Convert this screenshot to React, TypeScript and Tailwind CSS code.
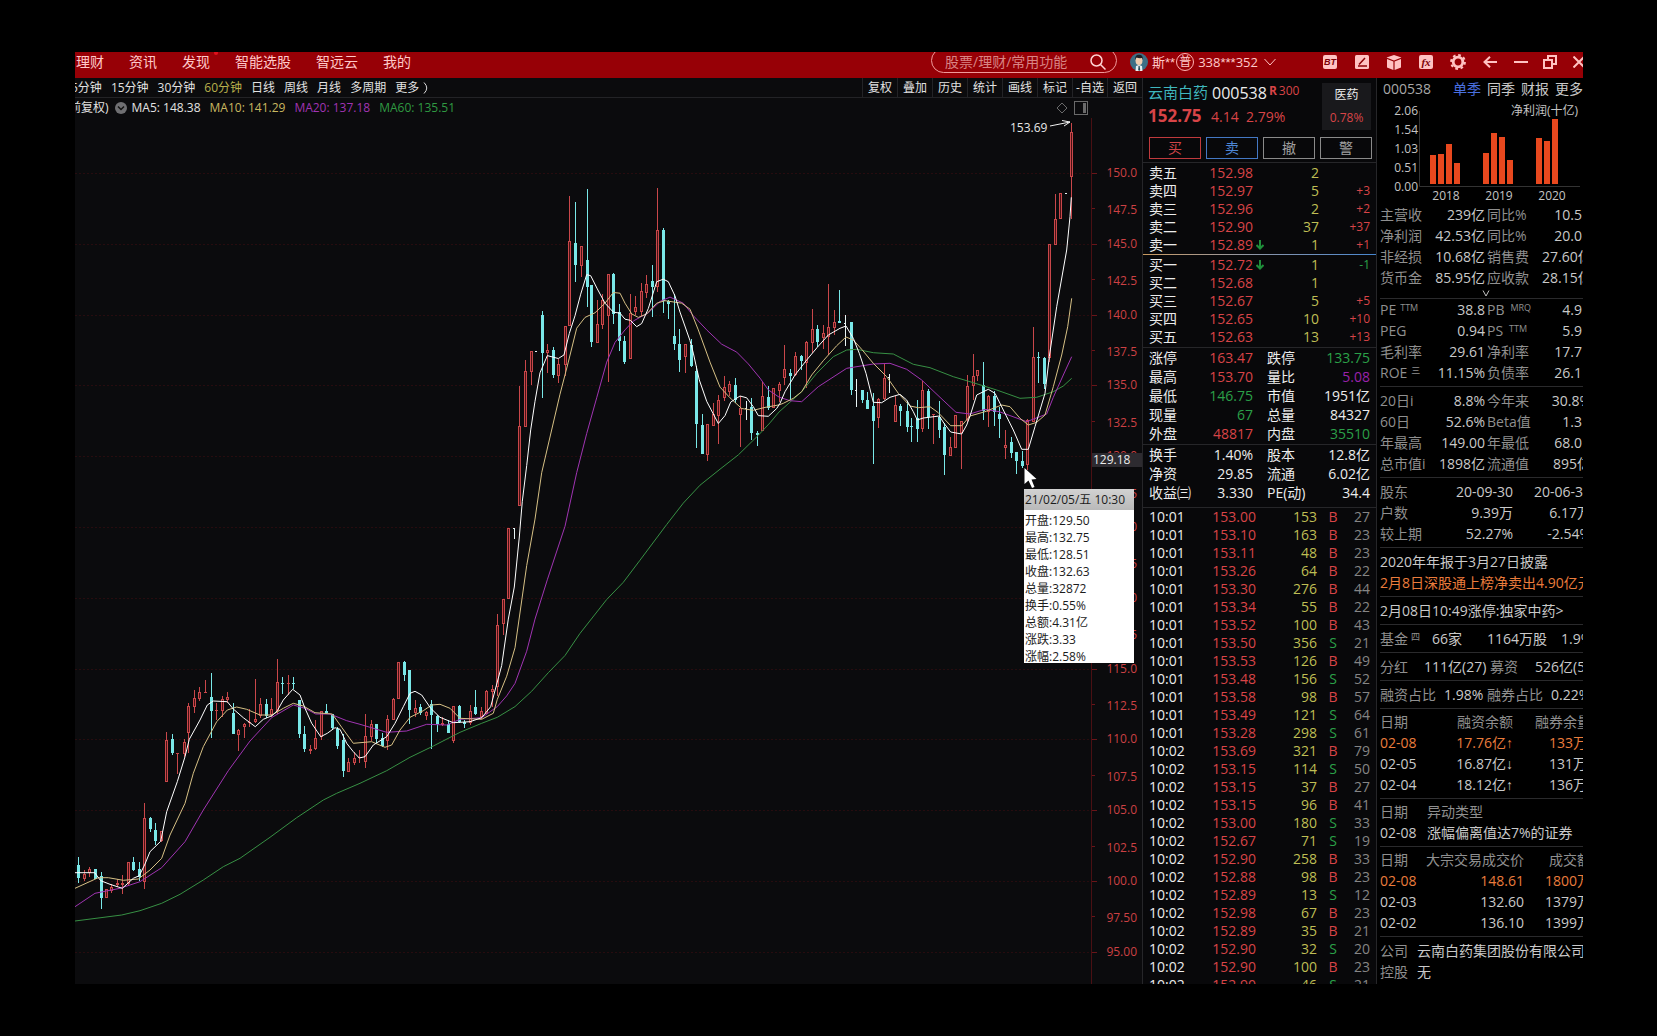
import React from "react";

type Kind = "r" | "c" | "w";
type Bar = [number, number, number, number, number, Kind];
interface Segment<T> {
  x: number;
  y: number;
  ky: number;
  rows: T[];
}

const K = 1 / 3;

// Each bar: x, high, body top, body bottom, low, kind. Units are thirds of a chart unit.
const BARS: Segment<Bar>[] = [
  {
    x: 70, y: 640, ky: K,
    rows: [
      [25, 652, 675, 714, 730, "c"], [43, 690, 702, 717, 722, "r"], [58, 682, 688, 700, 710, "r"], [76, 686, 688, 717, 718, "c"],
      [92, 697, 709, 773, 806, "c"], [109, 747, 748, 775, 775, "r"], [124, 733, 740, 752, 758, "r"], [141, 718, 730, 736, 740, "r"],
      [157, 706, 730, 735, 762, "r"], [175, 667, 667, 732, 735, "r"], [190, 652, 666, 690, 692, "c"], [208, 667, 688, 711, 724, "c"],
      [223, 489, 535, 725, 748, "r"], [241, 532, 534, 566, 575, "c"], [256, 550, 570, 602, 614, "c"], [274, 574, 574, 604, 606, "r"],
      [289, 277, 300, 425, 425, "r"], [307, 283, 298, 338, 344, "c"], [322, 340, 340, 342, 402, "r"], [341, 298, 307, 342, 350, "r"],
      [355, 190, 199, 280, 340, "r"], [373, 150, 175, 202, 220, "r"], [388, 141, 156, 178, 184, "r"], [406, 120, 156, 158, 160, "r"],
      [424, 99, 171, 212, 293, "c"], [439, 190, 210, 214, 240, "r"], [457, 167, 177, 213, 230, "r"], [472, 156, 172, 180, 190, "r"],
      [490, 188, 218, 281, 282, "c"], [505, 266, 269, 285, 332, "r"], [523, 250, 252, 262, 295, "r"], [538, 208, 245, 250, 260, "r"],
      [556, 117, 238, 246, 250, "r"], [571, 175, 192, 228, 235, "r"], [589, 178, 193, 228, 235, "c"], [604, 175, 207, 226, 230, "r"],
      [622, 57, 126, 213, 222, "r"], [637, 111, 129, 132, 162, "c"], [655, 106, 128, 132, 165, "r"], [670, 111, 128, 132, 147, "c"],
      [688, 180, 180, 283, 293, "c"], [703, 258, 283, 328, 335, "c"], [721, 315, 328, 332, 342, "r"], [736, 240, 295, 328, 330, "r"],
      [754, 212, 212, 290, 300, "r"], [769, 192, 212, 219, 222, "c"], [787, 222, 222, 264, 268, "c"], [802, 262, 268, 318, 328, "c"],
      [820, 283, 300, 392, 410, "c"], [835, 355, 367, 395, 395, "r"], [853, 337, 353, 368, 375, "r"], [868, 330, 350, 353, 368, "r"],
      [886, 223, 288, 367, 383, "r"], [904, 240, 252, 290, 303, "r"], [919, 252, 252, 297, 310, "c"], [937, 280, 295, 317, 322, "c"],
      [952, 225, 238, 302, 330, "r"], [970, 174, 176, 240, 240, "r"], [985, 67, 67, 178, 178, "r"], [1003, 64, 67, 104, 122, "c"],
      [1018, 90, 90, 210, 252, "c"], [1036, 180, 203, 218, 230, "r"], [1051, 193, 202, 220, 225, "c"], [1069, 214, 216, 228, 240, "r"],
      [1084, 180, 192, 226, 326, "c"], [1102, 225, 228, 252, 275, "c"], [1117, 230, 250, 254, 258, "r"], [1135, 240, 252, 280, 280, "c"],
      [1150, 197, 199, 303, 310, "r"], [1168, 195, 199, 246, 250, "c"], [1183, 240, 247, 252, 265, "c"], [1201, 195, 212, 250, 255, "r"],
      [1216, 150, 200, 222, 224, "c"], [1234, 200, 212, 232, 237, "r"], [1249, 150, 154, 222, 222, "r"], [1267, 135, 148, 155, 200, "r"],
    ],
  },
  {
    x: 460, y: 180, ky: 0.357,
    rows: [
      [112, 1215, 1246, 1420, 1445, "r"], [130, 1173, 1173, 1245, 1275, "r"], [145, 975, 975, 1175, 1175, "r"], [163, 974, 976, 978, 1005, "w"],
      [178, 578, 690, 912, 912, "r"], [196, 505, 535, 693, 693, "r"], [214, 480, 480, 537, 575, "r"], [229, 480, 480, 482, 482, "w"],
      [247, 367, 378, 484, 610, "c"], [262, 460, 475, 484, 540, "r"], [280, 468, 476, 546, 556, "c"], [295, 500, 516, 550, 570, "r"],
      [314, 409, 409, 518, 548, "r"], [328, 45, 171, 408, 410, "r"], [346, 62, 176, 238, 286, "c"], [362, 185, 185, 240, 272, "r"],
      [380, 25, 224, 299, 357, "c"], [394, 294, 295, 455, 468, "c"], [412, 335, 402, 456, 456, "r"], [427, 320, 335, 405, 418, "r"],
      [445, 264, 264, 380, 565, "r"], [460, 260, 263, 375, 402, "c"], [478, 348, 370, 450, 478, "c"], [493, 437, 450, 510, 515, "c"],
      [511, 320, 372, 500, 500, "r"], [526, 325, 357, 370, 378, "r"], [544, 288, 310, 370, 382, "r"], [559, 265, 290, 317, 330, "r"],
      [577, 238, 283, 300, 385, "c"], [592, 22, 141, 300, 315, "r"], [610, 134, 139, 338, 372, "c"], [625, 335, 340, 348, 390, "c"],
      [643, 320, 437, 459, 475, "c"], [658, 418, 459, 504, 538, "c"], [676, 460, 460, 497, 540, "r"], [694, 445, 462, 520, 525, "c"],
      [709, 520, 535, 683, 752, "c"], [727, 655, 686, 767, 767, "c"], [742, 683, 683, 770, 787, "r"], [760, 625, 655, 688, 690, "r"],
      [775, 602, 615, 660, 740, "r"], [793, 550, 580, 610, 620, "r"], [808, 562, 572, 595, 605, "r"], [826, 555, 574, 615, 625, "c"],
      [841, 605, 640, 658, 748, "r"], [859, 620, 640, 642, 672, "w"], [874, 610, 635, 708, 728, "c"], [892, 703, 710, 713, 745, "c"],
      [907, 567, 605, 703, 703, "r"], [925, 577, 608, 640, 645, "c"], [940, 582, 582, 640, 640, "r"], [957, 565, 572, 590, 622, "r"],
    ],
  },
  {
    x: 740, y: 260, ky: K,
    rows: [
      [133, 255, 327, 355, 375, "r"], [151, 327, 340, 347, 420, "c"], [166, 277, 288, 345, 348, "r"], [184, 285, 288, 302, 330, "c"],
      [199, 244, 247, 310, 385, "r"], [217, 147, 207, 248, 280, "r"], [232, 195, 207, 247, 262, "c"], [250, 195, 218, 235, 268, "r"],
      [265, 72, 202, 230, 285, "r"], [283, 150, 186, 203, 225, "r"], [298, 90, 183, 188, 188, "c"], [316, 165, 190, 192, 258, "w"],
      [334, 185, 186, 390, 405, "c"], [349, 357, 390, 391, 440, "w"], [367, 390, 391, 420, 430, "c"], [382, 395, 420, 446, 446, "c"],
      [400, 400, 438, 483, 612, "c"], [415, 415, 416, 475, 503, "r"], [433, 312, 355, 418, 420, "r"], [448, 342, 352, 355, 400, "w"],
      [466, 407, 435, 485, 485, "r"], [481, 432, 437, 453, 498, "c"], [500, 425, 453, 500, 515, "c"], [514, 475, 498, 502, 545, "c"],
      [532, 420, 475, 507, 545, "c"], [547, 362, 391, 507, 517, "r"], [565, 387, 392, 470, 507, "c"], [580, 462, 463, 465, 552, "r"],
      [598, 422, 470, 510, 535, "c"], [613, 488, 502, 584, 645, "c"], [631, 530, 562, 587, 587, "r"], [646, 465, 466, 563, 563, "r"],
      [664, 482, 483, 520, 628, "r"], [680, 345, 378, 480, 485, "r"], [698, 283, 348, 377, 420, "r"], [712, 330, 330, 348, 362, "r"],
      [730, 305, 374, 453, 480, "c"], [745, 405, 408, 455, 502, "r"], [763, 392, 407, 457, 497, "c"], [778, 440, 462, 478, 535, "c"],
    ],
  },
  {
    x: 970, y: 110, ky: K,
    rows: [
      [106, 960, 1005, 1013, 1047, "r"], [124, 980, 995, 1028, 1045, "c"], [139, 1025, 1026, 1053, 1092, "c"], [157, 1022, 1052, 1068, 1075, "c"],
      [172, 926, 930, 1065, 1080, "r"], [190, 652, 741, 935, 935, "r"], [205, 725, 741, 744, 818, "c"], [223, 741, 743, 822, 838, "c"],
      [238, 403, 403, 745, 755, "r"], [256, 252, 327, 404, 404, "r"], [271, 249, 249, 326, 326, "r"], [289, 249, 249, 252, 252, "w"],
      [304, 38, 67, 200, 327, "r"],
    ],
  },
];

const ORIGINS = [
  { x: 70, y: 640, ky: K },
  { x: 460, y: 180, ky: 0.357 },
  { x: 740, y: 260, ky: K },
  { x: 970, y: 110, ky: K },
];

const AVERAGES: { color: string; parts: string[] }[] = [
  {
    color: "#379044",
    parts: [
      "15,843 155,825 210,812 275,790 330,763 400,720 460,680 510,655 600,592 680,533 760,480 800,460 870,430 950,392 1020,352 1090,318 1170,277 1235,250",
      "112,1505 165,1475 215,1432 265,1380 315,1332 360,1270 440,1175 490,1127 540,1065 620,965 670,905 720,855 780,810 835,770 895,715 930,680 957,650",
      "185,395 230,340 280,290 320,270 350,268 400,278 460,282 520,313 570,323 640,350",
      "0,815 80,840 150,865 200,862 250,845 280,828 305,805",
    ],
  },
  {
    color: "#a034b2",
    parts: [
      "15,800 75,760 150,745 210,725 275,683 345,605 400,510 475,392 540,303 606,232 670,195 705,205 737,222 780,222 830,242 870,253 950,277 1010,273 1070,253 1130,255 1170,238 1235,233",
      "112,1475 140,1445 165,1410 200,1320 225,1230 262,1120 315,970 350,820 380,710 410,610 440,510 465,455 495,420 520,395 565,372 600,340 630,328 670,345 700,380 740,420 785,460 830,482 865,515 900,555 925,588 957,608",
      "150,422 185,425 235,380 320,325 400,312 450,310 500,328 545,360 600,412 648,457",
      "0,912 45,898 88,905 170,935 230,912 250,862 280,795 305,740",
    ],
  },
  {
    color: "#d6c085",
    parts: [
      "15,745 85,713 115,713 160,721 205,717 240,690 275,655 300,585 345,490 370,400 400,320 440,245 472,210 500,201 530,208 570,225 606,225 640,205 670,190 700,198 735,218 787,222 815,262 850,310 905,305 945,322 965,315 990,270 1020,232 1060,212 1085,195 1110,193 1140,205 1170,235 1235,238 1270,220",
      "112,1455 140,1390 165,1310 200,1080 225,950 245,820 270,720 300,600 325,510 350,415 375,385 405,372 435,345 460,315 480,317 495,345 515,375 535,385 560,375 590,345 615,338 665,345 690,362 715,420 750,510 780,580 810,610 845,640 880,645 915,637 957,630",
      "130,430 160,415 185,395 215,345 250,302 290,257 318,231 340,240 365,268 400,310 440,350 475,400 510,438 535,443 570,440 595,458 632,497 665,497",
      "0,918 45,905 70,895 95,885 120,890 150,925 175,945 200,937 225,915 250,830 275,735 293,650 305,565",
    ],
  },
  {
    color: "#ffffff",
    parts: [
      "15,698 74,698 92,722 120,733 157,745 190,715 208,707 225,672 240,635 272,604 290,515 322,425 345,350 358,298 390,240 412,195 430,183 472,185 490,207 520,233 556,260 580,238 606,227 622,212 640,180 668,148 690,165 705,205 725,250 752,290 772,280 795,263 810,268 830,310 850,335 868,354 885,350 910,315 950,290 975,250 1000,200 1020,160 1035,154 1055,165 1082,205 1110,232 1150,248 1200,245 1235,233 1262,200",
      "125,1360 145,1230 163,1140 178,1000 187,900 200,800 212,700 225,620 240,540 262,492 295,500 312,490 328,430 345,380 362,320 380,265 392,268 412,305 435,345 460,370 480,373 495,390 511,393 530,411 545,402 565,360 590,285 610,278 625,285 645,325 660,370 690,450 700,485 718,560 740,620 775,682 795,660 812,622 840,605 860,610 880,635 895,660 925,662 950,640",
      "120,430 135,395 165,345 200,300 232,262 265,225 300,205 318,198 340,235 358,280 378,340 400,427 425,428 450,412 480,403 500,420 520,455 532,480 550,474 598,468 612,490 632,516 665,522 680,495",
      "0,918 20,855 55,838 75,850 100,900 130,960 155,1018 175,1018 195,950 225,850 238,740 260,590 290,420 300,320 304,262",
    ],
  },
];

function averagePoints(parts: string[]) {
  return parts
    .map((part, i) =>
      part
        .split(" ")
        .map((pair) => {
          const [px, py] = pair.split(",").map(Number);
          const o = ORIGINS[i];
          return `${(o.x + px * K).toFixed(1)},${(o.y + py * o.ky).toFixed(1)}`;
        })
        .join(" "),
    )
    .join(" ");
}

const KIND_COLOR: Record<Kind, string> = { r: "#c9474a", c: "#79e8e8", w: "#e8f4f4" };

function Candle({ bar, seg }: { bar: Bar; seg: Segment<Bar> }) {
  const [bx, hi, top, bottom, lo, kind] = bar;
  const x = Math.round(seg.x + bx * K);
  const y = (v: number) => Math.round(seg.y + v * seg.ky);
  const color = KIND_COLOR[kind];
  const bodyH = Math.max(1, y(bottom) - y(top));
  if (kind === "r" && bodyH > 2) {
    return (
      <g shapeRendering="crispEdges">
        <rect x={x} y={y(hi)} width={1} height={Math.max(0, y(top) - y(hi))} fill={color} />
        <rect x={x} y={y(bottom)} width={1} height={Math.max(0, y(lo) - y(bottom))} fill={color} />
        <rect x={x - 1} y={y(top)} width={3} height={bodyH} fill={color} />
        <rect x={x} y={y(top) + 1} width={1} height={bodyH - 2} fill="#4a1214" />
      </g>
    );
  }
  return (
    <g shapeRendering="crispEdges" fill={color}>
      <rect x={x} y={y(hi)} width={1} height={Math.max(1, y(lo) - y(hi))} />
      <rect x={x - 1} y={y(top)} width={kind === "w" ? 2 : 3} height={bodyH} />
    </g>
  );
}

const PRICES = [
  "150.0", "147.5", "145.0", "142.5", "140.0", "137.5", "135.0", "132.5", "130.0", "127.5", "125.0", "122.5",
  "120.0", "117.5", "115.0", "112.5", "110.0", "107.5", "105.0", "102.5", "100.0", "97.50", "95.00",
];

function PriceChart() {
  return (
    <svg viewBox="75 118 1067 866" className="block h-full w-full" role="img" aria-label="60分钟K线">
      {PRICES.map((p, i) => {
        const y = Math.round(173 + i * 35.4);
        const major = i % 2 === 0;
        return (
          <g key={p}>
            {major && <line x1={75} x2={1092} y1={y + 0.5} y2={y + 0.5} stroke="#270c0f" strokeDasharray="2 2" />}
            <line x1={1092} x2={major ? 1097 : 1095} y1={y + 0.5} y2={y + 0.5} stroke="#6b1519" />
            <text x={1137} y={major ? y + 4 : y + 6} textAnchor="end" fontSize={12} fill="#cc4144">{p}</text>
          </g>
        );
      })}
      <line x1={1091.5} x2={1091.5} y1={118} y2={984} stroke="#4a1013" />
      {BARS.map((seg, s) => seg.rows.map((bar, i) => <Candle key={`${s}-${i}`} bar={bar} seg={seg} />))}
      {AVERAGES.map((a) => (
        <polyline key={a.color} points={averagePoints(a.parts)} fill="none" stroke={a.color} strokeWidth={1} />
      ))}
      <text x={1010} y={132} fontSize={12} fill="#e6e6e6">153.69</text>
      <path d="M1050 126 L1070 122 M1062 120.500 L1070 122 L1064 126" fill="none" stroke="#f0f0f0" />
      <rect x={1092} y={453} width={50} height={14} fill="#2d2b30" />
      <text x={1093} y={464} fontSize={12} fill="#ececec">129.18</text>
      <path d="M1024.500 468 v16 l4 -3.500 l3.500 7.500 l2.500 -1 l-3 -7.500 l5 -0.500 z" fill="#fff" />
    </svg>
  );
}

const TIP = [
  ["开盘", "129.50"], ["最高", "132.75"], ["最低", "128.51"], ["收盘", "132.63"], ["总量", "32872"],
  ["换手", "0.55%"], ["总额", "4.31亿"], ["涨跌", "3.33"], ["涨幅", "2.58%"],
];

function Stars({ n }: { n: number }) {
  return <span className="font-['Liberation_Sans']">{"*".repeat(n)}</span>;
}

function Header() {
  const icon = "flex h-[26px] w-8 shrink-0 items-center justify-center";
  const narrow = "flex h-[26px] w-[29px] shrink-0 items-center justify-center";
  const pink = "#ffc2c2";
  return (
    <header className="flex h-[26px] shrink-0 items-start overflow-hidden bg-[#970006] text-sm leading-5 text-[#ffc9c9]">
      <nav className="flex flex-1 gap-[25px] pl-px">
        <a href="#licai">理财</a>
        <a href="#zixun">资讯</a>
        <a href="#faxian" className="relative">
          发现
          <span className="absolute -right-2 -top-px size-1 rounded-full bg-[#e0101c]" />
        </a>
        <a href="#xuangu">智能选股</a>
        <a href="#yun">智远云</a>
        <a href="#wode">我的</a>
      </nav>
      <label className="-mt-1 mr-[13px] flex h-[25px] w-[186px] shrink-0 items-center rounded-full border border-[#f09a9a] pl-[13px] pr-2.5">
        <input
          aria-label="搜索"
          placeholder="股票/理财/常用功能"
          className="mt-0.5 w-0 flex-1 bg-transparent text-sm leading-5 outline-none placeholder:text-[#d98484]"
        />
        <svg viewBox="0 0 16 16" className="mt-0.5 size-4" fill="none" stroke="#ffd4d4" strokeWidth="1.500">
          <circle cx="6.500" cy="6.500" r="5.500" />
          <path d="M10.500 10.500 L15.500 15.500" />
        </svg>
      </label>
      <div className="flex h-5 w-[184px] shrink-0 items-center">
        <svg viewBox="0 0 18 18" className="size-[18px]">
          <circle cx="9" cy="9" r="9" fill="#3d6f86" />
          <path d="M5.500 18 L6 13 L9 12 L12 13 L12.500 18 Z" fill="#e8f0f2" />
          <ellipse cx="9" cy="7.500" rx="3.500" ry="4.500" fill="#f0cdb0" />
          <path d="M5 7 Q5 1.500 9 1.800 Q13 1.500 13 7 L12 5 Q9 5.500 6.500 4.500 Z" fill="#1b2027" />
          <path d="M8.500 13 h1.200 l0.500 4 l-1 1 l-1 -1 z" fill="#254a5a" />
        </svg>
        <span className="ml-1 text-[13px]">斯<Stars n={2} /></span>
        <span className="ml-px flex size-[18px] items-center justify-center rounded-full border border-[#ffb4b4] text-xs leading-4">普</span>
        <span className="ml-1 text-[13px]">338<Stars n={3} />352</span>
        <svg viewBox="0 0 12 8" className="ml-1.5 h-2 w-3" fill="none" stroke={pink}><path d="M0.500 1 L6 7 L11.500 1" /></svg>
      </div>
      <div className="-mr-2.5 -mt-[3px] flex shrink-0">
        <button aria-label="BT" className={icon}>
          <span className="flex h-3.5 w-3.5 items-center justify-center rounded-xs bg-[#ffc2c2] font-['Liberation_Sans'] text-[9px] font-bold italic leading-3 text-[#7d0006]">BT</span>
        </button>
        <button aria-label="画笔" className={icon}>
          <svg viewBox="0 0 14 14" className="size-3.5"><rect width="14" height="14" rx="1.500" fill={pink} /><path d="M3 11 H12 M4 9.500 L10 3" stroke="#8d0006" strokeWidth="1.500" /></svg>
        </button>
        <button aria-label="工具箱" className={icon}>
          <svg viewBox="0 0 16 15" className="h-[15px] w-4" fill={pink}><path d="M8 0 L15.500 2.500 L8 5.500 L0.500 2.500 Z M1 4 L7.400 6.500 V15 L1 12.500 Z M15 4 L8.600 6.500 V15 L15 12.500 Z" /></svg>
        </button>
        <button aria-label="公式" className={icon}>
          <span className="flex h-3.5 w-3.5 items-center justify-center rounded-xs bg-[#ffc2c2] font-['Liberation_Serif'] text-[11px] font-bold italic leading-3 text-[#7d0006]">fx</span>
        </button>
        <button aria-label="设置" className={icon}>
          <svg viewBox="0 0 16 16" className="size-4" fill="none" stroke={pink}>
            <circle cx="8" cy="8" r="4.800" strokeWidth="2.800" />
            <circle cx="8" cy="8" r="6.900" strokeWidth="2" strokeDasharray="2.710 2.709" />
          </svg>
        </button>
        <button aria-label="后退" className={icon}>
          <svg viewBox="0 0 14 12" className="h-3 w-3.5" fill="none" stroke={pink} strokeWidth="2"><path d="M14 6 H1.500 M7 0.800 L1.500 6 L7 11.200" /></svg>
        </button>
        <button aria-label="最小化" className={narrow}>
          <svg viewBox="0 0 14 2" className="h-0.5 w-3.5"><rect width="14" height="2" fill={pink} /></svg>
        </button>
        <button aria-label="还原" className={narrow}>
          <svg viewBox="0 0 14 14" className="size-3.5" fill="none" stroke={pink} strokeWidth="2"><path d="M1 5 H9 V13 H1 Z M5 5 V1 H13 V9 H9" /></svg>
        </button>
        <button aria-label="关闭" className={narrow}>
          <svg viewBox="0 0 12 12" className="size-3" fill="none" stroke={pink} strokeWidth="2"><path d="M0.500 0.500 L11.500 11.500 M11.500 0.500 L0.500 11.500" /></svg>
        </button>
      </div>
    </header>
  );
}

const PERIODS = ["15分钟", "30分钟", "60分钟", "日线", "周线", "月线", "多周期"];
const ACTIONS = ["复权", "叠加", "历史", "统计", "画线", "标记", "-自选", "返回"];

function ChartPane() {
  return (
    <section className="flex min-w-0 flex-1 flex-col bg-[#0b0b0d] text-xs text-[#e2e2e2]">
      <div className="flex h-5 shrink-0 items-center justify-between border-b border-[#232326]">
        <div className="-ml-1 flex gap-[9px] leading-4">
          <button>5分钟</button>
          {PERIODS.map((p) => (
            <button key={p} className={p === "60分钟" ? "text-[#b9b04c]" : ""}>{p}</button>
          ))}
          <button className="flex items-center gap-1">
            更多
            <svg viewBox="0 0 6 12" className="h-3 w-1.5" fill="none" stroke="#d8d8d8"><path d="M1 0.500 Q6.500 6 1 11.500" /></svg>
          </button>
        </div>
        <div className="flex">
          {ACTIONS.map((a) => (
            <button key={a} className="h-[19px] w-[35px] whitespace-nowrap border-l border-[#232326] text-center leading-4">{a}</button>
          ))}
        </div>
      </div>
      <div className="flex h-5 shrink-0 items-center gap-[9px] leading-4">
        <span className="-ml-1.5 -mr-[3px]">前复权)</span>
        <button aria-label="展开指标" className="-mr-1">
          <svg viewBox="0 0 12 12" className="size-3"><circle cx="6" cy="6" r="6" fill="#6f6f72" /><path d="M3 4.500 L6 7.500 L9 4.500" fill="none" stroke="#111" strokeWidth="1.500" /></svg>
        </button>
        <span>MA5: 148.38</span>
        <span className="text-[#c9b860]">MA10: 141.29</span>
        <span className="text-[#a034b2]">MA20: 137.18</span>
        <span className="text-[#2f9a42]">MA60: 135.51</span>
        <div className="ml-auto mr-[54px] flex items-center gap-1.5">
          <svg viewBox="0 0 12 12" className="size-3" fill="none" stroke="#6a6a6a"><path d="M6 1 L11 6 L6 11 L1 6 Z" /></svg>
          <svg viewBox="0 0 14 14" className="size-3.5"><rect x="0.500" y="0.500" width="13" height="13" fill="none" stroke="#6a6a6a" /><rect x="9" y="2" width="3" height="10" fill="#6a6a6a" /></svg>
        </div>
      </div>
      <div className="relative min-h-0 flex-1">
        <PriceChart />
        <div className="absolute left-[949px] top-[371px] h-[174px] w-[110px] overflow-hidden bg-white text-xs leading-[17px] text-[#1c1c1c]">
          <div className="whitespace-nowrap bg-linear-to-b from-[#d2d2d2] to-[#b9b9b9] pl-px leading-[21px]">21/02/05/五 10:30</div>
          <dl className="pt-0.5">
            {TIP.map(([k, v]) => (
              <div key={k} className="flex pl-px">
                <dt>{k}:</dt>
                <dd>{v}</dd>
              </div>
            ))}
          </dl>
        </div>
      </div>
    </section>
  );
}

const RED = "text-[#d84447]";
const GREEN = "text-[#2ba048]";
const YELLOW = "text-[#bfbe54]";

type Level = [string, string, string, string, boolean?];
const ASKS: Level[] = [
  ["卖五", "152.98", "2", ""], ["卖四", "152.97", "5", "+3"], ["卖三", "152.96", "2", "+2"],
  ["卖二", "152.90", "37", "+37"], ["卖一", "152.89", "1", "+1", true],
];
const BIDS: Level[] = [
  ["买一", "152.72", "1", "-1", true], ["买二", "152.68", "1", ""], ["买三", "152.67", "5", "+5"],
  ["买四", "152.65", "10", "+10"], ["买五", "152.63", "13", "+13"],
];

function Depth({ levels, label }: { levels: Level[]; label: string }) {
  return (
    <table aria-label={label} className="w-full table-fixed leading-[18px]">
      <colgroup>
        <col className="w-[50px]" /><col className="w-[60px]" /><col className="w-[66px]" /><col />
      </colgroup>
      <tbody>
        {levels.map(([name, price, qty, delta, arrow]) => (
          <tr key={name} className="h-[18px]">
            <th className="p-0 pl-1.5 text-left font-normal">{name}</th>
            <td className={`relative p-0 text-right ${RED}`}>
              {price}
              {arrow && (
                <svg viewBox="0 0 8 10" className="absolute -right-[11px] top-1 h-2.5 w-2" fill="none" stroke="#1f8f3a" strokeWidth="2">
                  <path d="M4 0 V9 M0.500 5 L4 8.500 L7.500 5" />
                </svg>
              )}
            </td>
            <td className={`p-0 text-right ${YELLOW}`}>{qty}</td>
            <td className={`p-0 pr-1.5 text-right text-xs ${delta.startsWith("-") ? GREEN : RED}`}>{delta}</td>
          </tr>
        ))}
      </tbody>
    </table>
  );
}

type Stat = [string, string, string, string, string, string];
const STATS_A: Stat[] = [
  ["涨停", "163.47", RED, "跌停", "133.75", GREEN],
  ["最高", "153.70", RED, "量比", "5.08", "text-[#9a22ab]"],
  ["最低", "146.75", GREEN, "市值", "1951亿", ""],
  ["现量", "67", GREEN, "总量", "84327", ""],
  ["外盘", "48817", RED, "内盘", "35510", GREEN],
];
const STATS_B: Stat[] = [
  ["换手", "1.40%", "", "股本", "12.8亿", ""],
  ["净资", "29.85", "", "流通", "6.02亿", ""],
  ["收益㈢", "3.330", "", "PE(动)", "34.4", ""],
];

function Stats({ rows, label }: { rows: Stat[]; label: string }) {
  return (
    <table aria-label={label} className="w-full table-fixed leading-[19px]">
      <colgroup>
        <col className="w-[55px]" /><col className="w-[55px]" /><col className="w-[60px]" /><col />
      </colgroup>
      <tbody>
        {rows.map(([a, av, ac, b, bv, bc]) => (
          <tr key={a} className="h-[19px]">
            <th className="whitespace-nowrap p-0 pl-1.5 text-left font-normal">{a}</th>
            <td className={`p-0 text-right ${ac}`}>{av}</td>
            <th className="whitespace-nowrap p-0 pl-3.5 text-left font-normal">{b}</th>
            <td className={`p-0 pr-1.5 text-right ${bc}`}>{bv}</td>
          </tr>
        ))}
      </tbody>
    </table>
  );
}

const TRADES = `10:01 153.00 153 B 27
10:01 153.10 163 B 23
10:01 153.11 48 B 23
10:01 153.26 64 B 22
10:01 153.30 276 B 44
10:01 153.34 55 B 22
10:01 153.52 100 B 43
10:01 153.50 356 S 21
10:01 153.53 126 B 49
10:01 153.48 156 S 52
10:01 153.58 98 B 57
10:01 153.49 121 S 64
10:01 153.28 298 S 61
10:02 153.69 321 B 79
10:02 153.15 114 S 50
10:02 153.15 37 B 27
10:02 153.15 96 B 41
10:02 153.00 180 S 33
10:02 152.67 71 S 19
10:02 152.90 258 B 33
10:02 152.88 98 B 23
10:02 152.89 13 S 12
10:02 152.98 67 B 23
10:02 152.89 35 B 21
10:02 152.90 32 S 20
10:02 152.90 100 B 23
10:02 152.90 46 S 21`.split("\n").map((l) => l.split(" "));

function QuotePane() {
  return (
    <section className="flex w-[234px] shrink-0 flex-col overflow-hidden border-l border-[#262629] bg-[#08080a] text-sm text-[#ececec]">
      <div className="flex h-[85px] shrink-0 flex-col border-b border-[#262629]">
        <div className="flex justify-between pl-[5px] pr-[5px]">
          <div>
            <div className="mt-[3px] flex h-[23px] items-center whitespace-nowrap">
              <h1 className="w-16 text-[15px] text-[#3fb6bd]">云南白药</h1>
              <span className="text-base">000538</span>
              <span className={`-mt-1 ml-0.5 flex gap-0.5 text-xs ${RED}`}><b>R</b>300</span>
            </div>
            <div className={`flex h-[25px] items-center ${RED}`}>
              <strong className="w-[63px] text-[17px]">152.75</strong>
              <span className="w-[35px]">4.14</span>
              <span>2.79%</span>
            </div>
          </div>
          <a href="#sector" className="mt-[5px] flex h-[47px] w-[49px] flex-col items-center justify-between bg-[#19191c] py-1 text-xs leading-4">
            <span>医药</span>
            <span className={RED}>0.78%</span>
          </a>
        </div>
        <div className="mt-[7px] grid grid-cols-4 gap-[5px] pl-1.5 pr-1 leading-5">
          <button className="h-[22px] border border-[#c03a3d] text-[#d04447]">买</button>
          <button className="h-[22px] border border-[#4478c4] text-[#4d86d6]">卖</button>
          <button className="h-[22px] border border-[#8a8a8a] text-[#a0a0a0]">撤</button>
          <button className="h-[22px] border border-[#8a8a8a] text-[#a0a0a0]">警</button>
        </div>
      </div>
      <div className="shrink-0 pt-px"><Depth levels={ASKS} label="卖盘" /></div>
      <div className="h-0.5 shrink-0 bg-linear-to-r from-[#c9995f] via-[#8a94a8] to-[#4686d0] bg-clip-content pb-px" />
      <div className="shrink-0 border-b border-[#262629] pb-px"><Depth levels={BIDS} label="买盘" /></div>
      <div className="shrink-0 border-b border-[#262629] pb-px"><Stats rows={STATS_A} label="行情" /></div>
      <div className="shrink-0 border-b border-[#262629] pb-[5px]"><Stats rows={STATS_B} label="基本面" /></div>
      <table aria-label="逐笔成交" className="w-full table-fixed leading-[18px]">
        <colgroup>
          <col className="w-[50px]" /><col className="w-[63px]" /><col className="w-[61px]" /><col className="w-8" /><col />
        </colgroup>
        <tbody>
          {TRADES.map(([t, p, q, side, n], i) => (
            <tr key={i} className="h-[18px]">
              <td className="p-0 pl-1.5">{t}</td>
              <td className={`p-0 text-right ${RED}`}>{p}</td>
              <td className={`p-0 text-right ${YELLOW}`}>{q}</td>
              <td className={`p-0 text-center ${side === "B" ? RED : GREEN}`}>{side}</td>
              <td className="p-0 pr-1.5 text-right text-[#858585]">{n}</td>
            </tr>
          ))}
        </tbody>
      </table>
    </section>
  );
}

const PROFIT = [
  { year: "2018", x: 54, tops: [56, 55, 45, 64] },
  { year: "2019", x: 107, tops: [54, 34, 38, 61] },
  { year: "2020", x: 160, tops: [39, 42, 20] },
];

function ProfitChart() {
  return (
    <svg viewBox="0 0 206 105" className="block w-full shrink-0" role="img" aria-label="净利润">
      {["2.06", "1.54", "1.03", "0.51", "0.00"].map((v, i) => (
        <text key={v} x={41} y={Math.round(16 + i * 18.9)} textAnchor="end" fontSize={12} fill="#c4c4c4">{v}</text>
      ))}
      <path d="M42.500 12 V87.500 H203" fill="none" stroke="#333" />
      <text x={201} y={16} textAnchor="end" fontSize={12} fill="#c4c4c4">净利润(十亿)</text>
      {PROFIT.map((g) => (
        <g key={g.year}>
          {g.tops.map((t, i) => (
            <rect key={i} x={g.x - 1 + i * 8} y={t} width={6} height={85 - t} fill="#e8481e" />
          ))}
          <text x={g.x + 15} y={101} textAnchor="middle" fontSize={12} fill="#c4c4c4">{g.year}</text>
        </g>
      ))}
    </svg>
  );
}

type Cell = [React.ReactNode, string?];
function Facts({ cols, rows, label, head }: { cols: string[]; rows: Cell[][]; label: string; head?: boolean }) {
  return (
    <table aria-label={label} className="w-[calc(100%+8px)] table-fixed leading-5">
      <colgroup>{cols.map((c, i) => <col key={i} className={c} />)}</colgroup>
      <tbody>
        {rows.map((row, r) => (
          <tr key={r} className={head && r === 0 ? "h-5" : "h-[21px]"}>
            {row.map(([text, cls], i) => (
              <td key={i} className={`whitespace-nowrap p-0 ${cls ?? ""}`}>{text}</td>
            ))}
          </tr>
        ))}
      </tbody>
    </table>
  );
}

const L = "text-[#8f8f8f]";
const R = "text-right";
const CUT = "text-right pr-[9px]";
const WARM = "text-[#ea7c3c]";
const WR = "text-right text-[#ea7c3c]";
const LR = "text-right text-[#8f8f8f]";
const four = (a: string, b: string, c: string, d: string, cut = false): Cell[] => [[a, L], [b, R], [c, `${L} pl-0.5`], [d, cut ? CUT : R]];

const FOUR = ["w-[52px]", "w-[53px]", "w-[57px]", ""];
const THREE = ["w-[50px]", "w-[83px]", ""];
const DEALS = ["w-[44px]", "w-[100px]", ""];

function Trend({ value, dir }: { value: string; dir: string }) {
  return <>{value}<span className="font-['Liberation_Sans']">{dir}</span></>;
}

function PairTable({ rows, label }: { rows: [string, string, string, string, string, string, boolean][]; label: string }) {
  return (
    <table aria-label={label} className="w-[calc(100%+8px)] table-fixed leading-[21px]">
      <colgroup>{FOUR.map((c, i) => <col key={i} className={c} />)}</colgroup>
      <tbody>
        {rows.map(([a, as, av, b, bs, bv, cut]) => (
          <tr key={a} className="h-[21px]">
            <td className={`whitespace-nowrap p-0 ${L}`}>{a}{as && <sup className="relative -top-1 ml-1 align-baseline text-[9px] leading-none">{as}</sup>}</td>
            <td className="whitespace-nowrap p-0 text-right">{av}</td>
            <td className={`whitespace-nowrap p-0 pl-0.5 ${L}`}>{b}{bs && <sup className="relative -top-1 ml-1.5 align-baseline text-[9px] leading-none">{bs}</sup>}</td>
            <td className={`whitespace-nowrap p-0 ${cut ? CUT : R}`}>{bv}</td>
          </tr>
        ))}
      </tbody>
    </table>
  );
}

function Block({ children, last }: { children: React.ReactNode; last?: boolean }) {
  return <div className={last ? "ml-[3px] py-[3px]" : "ml-[3px] border-b border-[#2a2a2c] py-[3px]"}>{children}</div>;
}

function FactsPane() {
  return (
    <aside className="w-[207px] shrink-0 overflow-hidden border-l border-[#262629] bg-black text-sm text-[#c9c9c9]">
      <div className="flex h-[21px] items-center justify-between pl-1.5 leading-5">
        <span className="text-[#a8a8a8]">000538</span>
        <div className="flex gap-1.5">
          <button className="text-[#4a70e0]">单季</button>
          <button>同季</button>
          <button>财报</button>
          <button>更多</button>
        </div>
      </div>
      <ProfitChart />
      <div className="ml-[3px] flex flex-col border-b border-[#2a2a2c]">
        <Facts label="财务" cols={FOUR} rows={[
          four("主营收", "239亿", "同比%", "10.5", true),
          four("净利润", "42.53亿", "同比%", "20.0", true),
          four("非经损", "10.68亿", "销售费", "27.60亿"),
          four("货币金", "85.95亿", "应收款", "28.15亿"),
        ]} />
        <button aria-label="展开" className="flex h-2.5 items-center justify-center pl-2">
          <svg viewBox="0 0 8 7" className="h-[7px] w-2" fill="none" stroke="#c0c0c0"><path d="M1 0.500 L4 6 L7 0.500" /></svg>
        </button>
      </div>
      <div className="ml-[3px] border-b border-[#2a2a2c] pb-[3px]">
        <PairTable label="估值" rows={[
          ["PE", "TTM", "38.8", "PB", "MRQ", "4.9", true],
          ["PEG", "", "0.94", "PS", "TTM", "5.9", true],
          ["毛利率", "", "29.61", "净利率", "", "17.7", true],
          ["ROE", "三", "11.15%", "负债率", "", "26.1", true],
        ]} />
      </div>
      <Block>
        <Facts label="表现" cols={FOUR} rows={[
          four("20日i", "8.8%", "今年来", "30.8%"),
          four("60日", "52.6%", "Beta值", "1.3", true),
          four("年最高", "149.00", "年最低", "68.0", true),
          four("总市值i", "1898亿", "流通值", "895亿"),
        ]} />
      </Block>
      <Block>
        <Facts label="股东" cols={THREE} rows={[
          [["股东", L], ["20-09-30", R], ["20-06-30", R]],
          [["户数", L], ["9.39万", R], ["6.17万", R]],
          [["较上期", L], ["52.27%", R], ["-2.54%", R]],
        ]} />
      </Block>
      <Block>
        <p className="whitespace-nowrap leading-[21px]">2020年年报于3月27日披露</p>
        <p className={`whitespace-nowrap leading-[21px] ${WARM}`}>2月8日深股通上榜净卖出4.90亿元</p>
      </Block>
      <Block>
        <a href="#limit" className="block whitespace-nowrap leading-[21px]">2月08日10:49涨停:独家中药&gt;</a>
      </Block>
      <Block>
        <div className="flex whitespace-nowrap leading-[21px]">
          <span className={`w-[52px] shrink-0 ${L}`}>基金<sup className="relative -top-1 ml-[3px] align-baseline text-[9px] leading-none">四</sup></span>
          <span className="w-[55px] shrink-0">66家</span>
          <span className="w-[74px] shrink-0">1164万股</span>
          <span>1.9%</span>
        </div>
      </Block>
      <Block>
        <div className="flex whitespace-nowrap leading-[21px]">
          <span className={`w-11 shrink-0 ${L}`}>分红</span>
          <span className="w-[66px] shrink-0">111亿(27)</span>
          <span className={`w-[45px] shrink-0 ${L}`}>募资</span>
          <span>526亿(5)</span>
        </div>
      </Block>
      <Block>
        <div className="flex whitespace-nowrap leading-[21px]">
          <span className={`w-16 shrink-0 ${L}`}>融资占比</span>
          <span className="w-[43px] shrink-0">1.98%</span>
          <span className={`w-16 shrink-0 ${L}`}>融券占比</span>
          <span>0.22%</span>
        </div>
      </Block>
      <Block>
        <Facts head label="融资融券" cols={THREE} rows={[
          [["日期", L], ["融资余额", LR], ["融券余量", LR]],
          [["02-08", WARM], [<Trend value="17.76亿" dir="↑" />, WR], ["133万", `${WR} pr-1`]],
          [["02-05"], [<Trend value="16.87亿" dir="↓" />, R], ["131万", "text-right pr-1"]],
          [["02-04"], [<Trend value="18.12亿" dir="↑" />, R], ["136万", "text-right pr-1"]],
        ]} />
      </Block>
      <Block>
        <Facts head label="异动" cols={["w-[47px]", ""]} rows={[
          [["日期", L], ["异动类型", L]],
          [["02-08"], ["涨幅偏离值达7%的证券"]],
        ]} />
      </Block>
      <Block>
        <Facts head label="大宗交易" cols={DEALS} rows={[
          [["日期", L], ["大宗交易成交价", LR], ["成交额", LR]],
          [["02-08", WARM], ["148.61", WR], ["1800万", WR]],
          [["02-03"], ["132.60", R], ["1379万", R]],
          [["02-02"], ["136.10", R], ["1399万", R]],
        ]} />
      </Block>
      <Block last>
        <Facts label="公司" cols={["w-[37px]", ""]} rows={[
          [["公司", L], ["云南白药集团股份有限公司"]],
          [["控股", L], ["无"]],
        ]} />
      </Block>
    </aside>
  );
}

export default function App() {
  return (
    <div className="flex h-screen flex-col overflow-hidden bg-black py-[52px] pl-[75px] pr-[74px] font-['Open_Sans','Noto_Sans_CJK_SC',sans-serif]">
      <Header />
      <main className="flex min-h-0 flex-1 overflow-hidden">
        <ChartPane />
        <QuotePane />
        <FactsPane />
      </main>
    </div>
  );
}
